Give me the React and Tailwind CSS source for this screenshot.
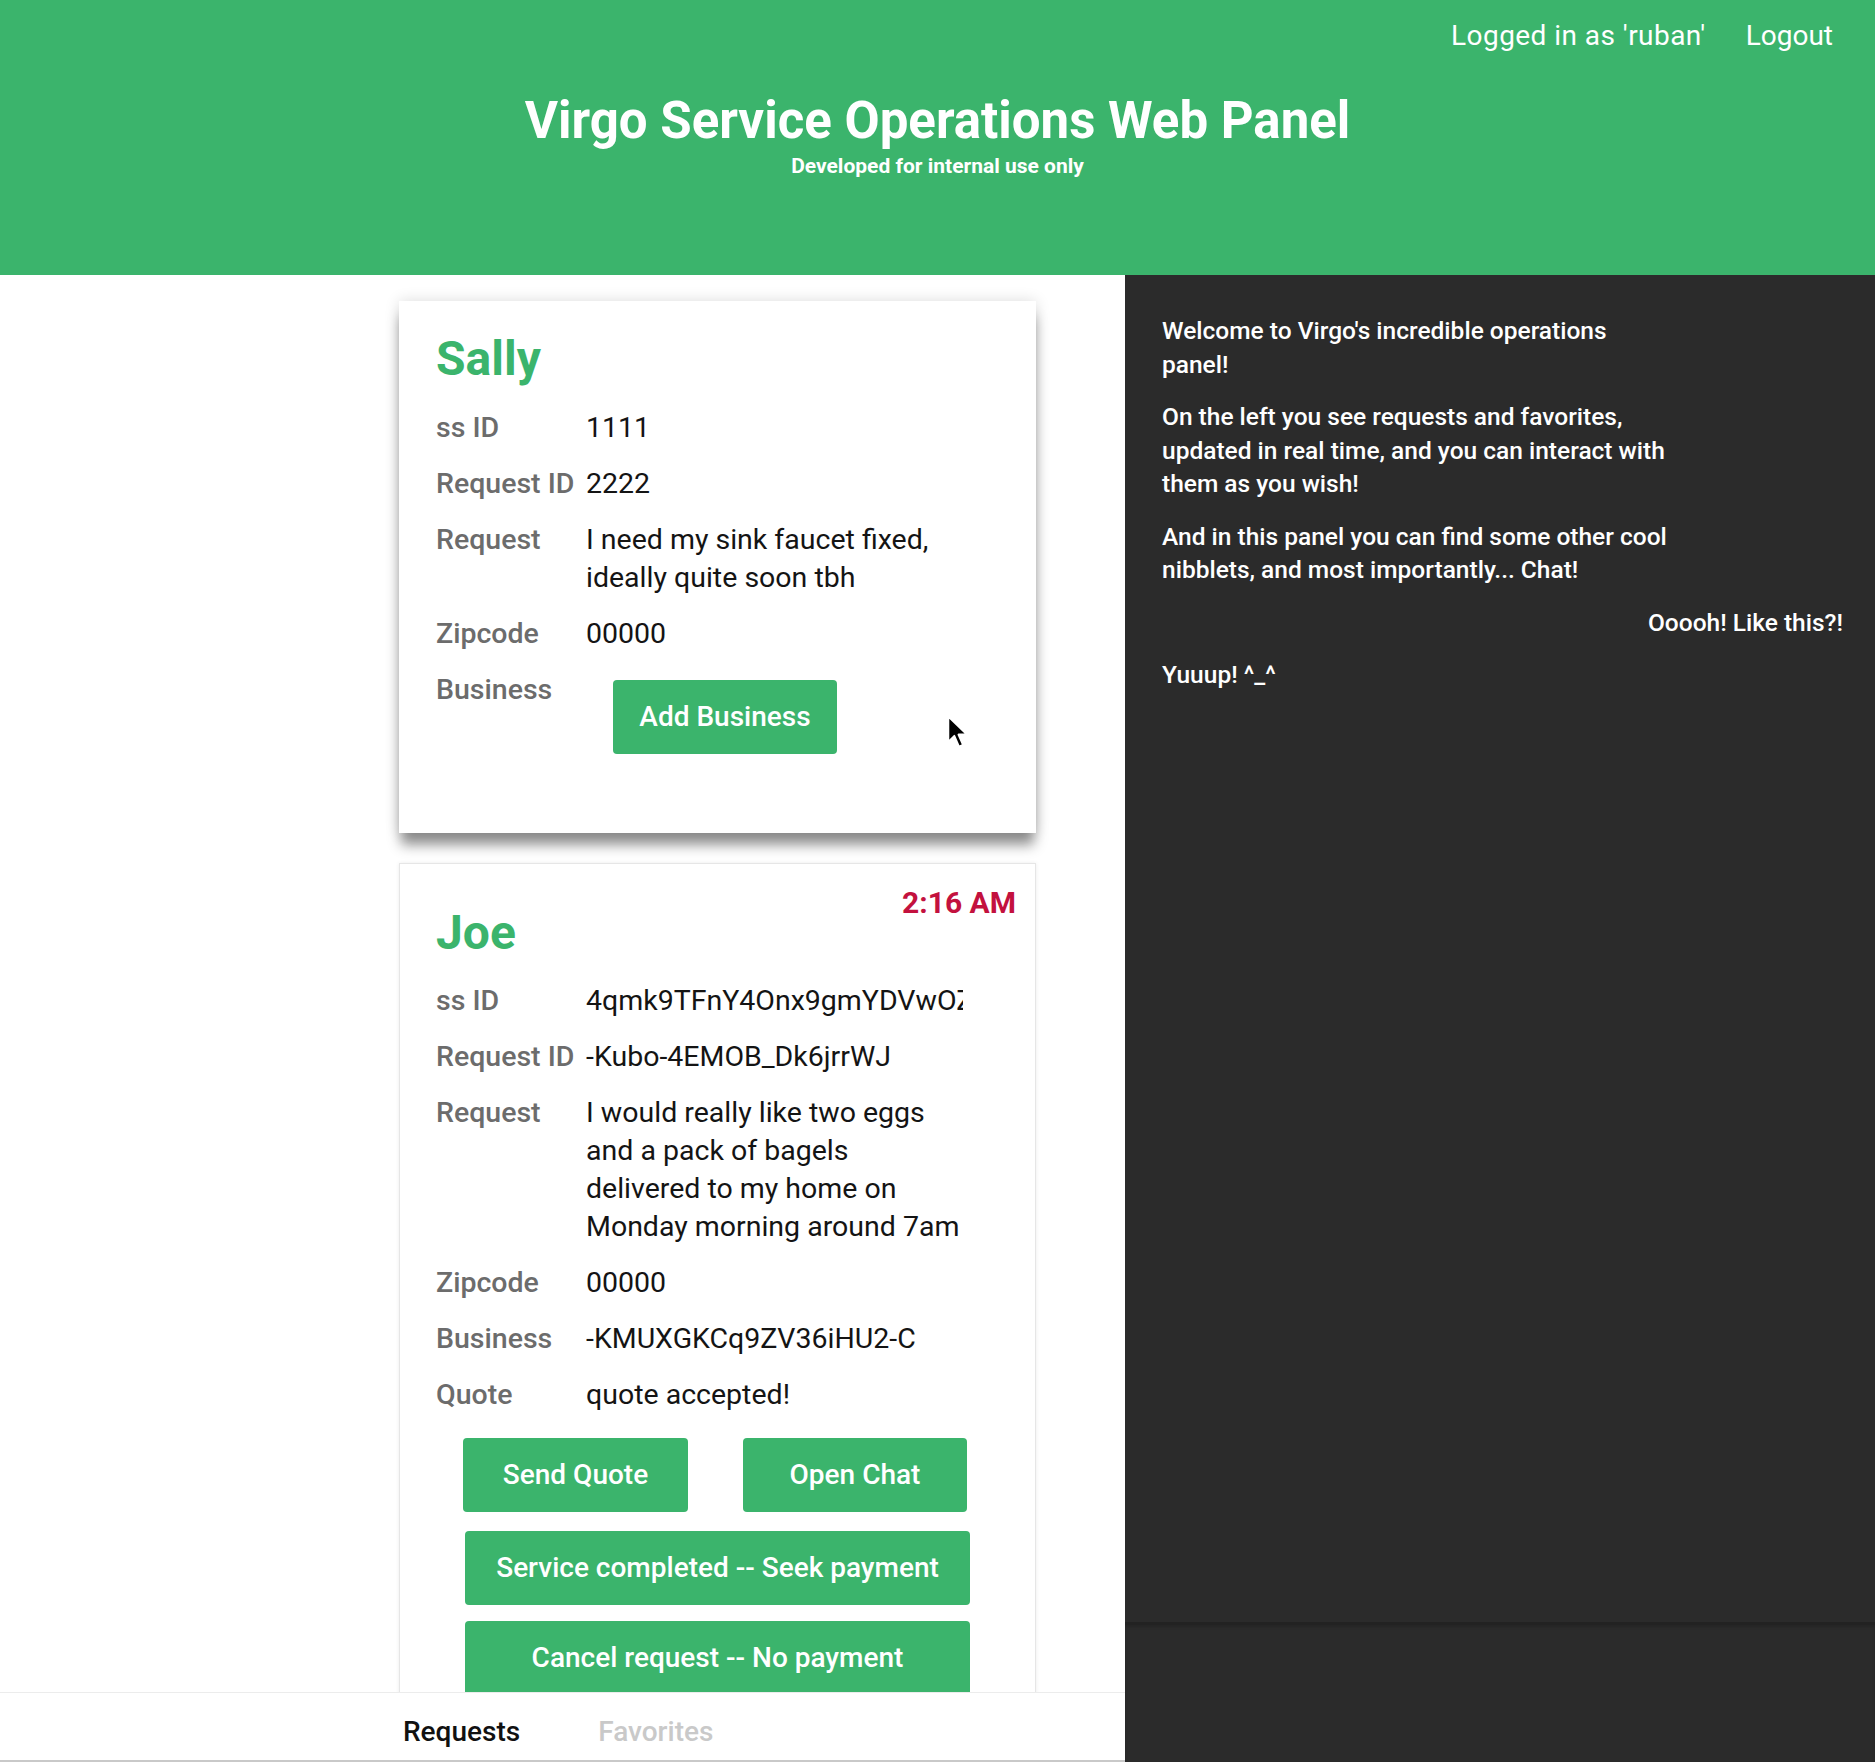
import React from "react";

const GREEN = "bg-[#3bb46c]";

function Row({ label, children, valueClass = "" }) {
  return (
    <div className="flex mt-[18px] first:mt-0">
      <div className="w-[150px] shrink-0 text-[28.5px] leading-[38px] font-medium text-[#6c6c6c]">{label}</div>
      <div className={"w-[377px] shrink-0 overflow-hidden text-[28.5px] leading-[38px] text-[#141414] " + valueClass}>{children}</div>
    </div>
  );
}

function Btn({ children, className = "" }) {
  return (
    <button className={"bg-[#3bb46c] text-white text-[28px] font-medium rounded-[4px] h-[74px] flex items-center justify-center " + className}>
      {children}
    </button>
  );
}

export default function App() {
  return (
    <div className="relative w-full h-[1762px] flex flex-col overflow-hidden" style={{ fontFamily: "Roboto, 'Noto Sans', sans-serif" }}>
      {/* Header */}
      <header className={GREEN + " h-[275px] shrink-0 flex flex-col text-white"}>
        <nav className="flex justify-end items-center gap-[40px] pt-[19px] pr-[42px] text-[28px] leading-[34px]">
          <span className="tracking-[0.45px]">Logged in as 'ruban'</span>
          <span>Logout</span>
        </nav>
        <h1 className="mt-[37px] text-center text-[51px] leading-[62px] font-bold">Virgo Service Operations Web Panel</h1>
        <p className="mt-[2px] text-center text-[21px] leading-[25px] font-bold">Developed for internal use only</p>
      </header>

      {/* Body */}
      <div className="flex flex-1 min-h-0">
        {/* Left column */}
        <div className="w-[1125px] shrink-0 bg-white flex flex-col">
          <div className="flex-1 min-h-0 overflow-hidden pl-[399px] pt-[26px]">
            {/* Card 1 */}
            <div className="w-[637px] bg-white pt-[29px] px-[37px] pb-[79px] shadow-[0_14px_12px_-2px_rgba(0,0,0,0.42),0_0_14px_rgba(0,0,0,0.14)]">
              <h2 className="text-[48px] leading-[58px] font-bold text-[#3bb46c] mb-[21px]">Sally</h2>
              <Row label="ss ID">1111</Row>
              <Row label="Request ID">2222</Row>
              <Row label="Request">I need my sink faucet fixed, ideally quite soon tbh</Row>
              <Row label="Zipcode">00000</Row>
              <Row label="Business">
                <Btn className="mt-[9px] ml-[27px] w-[224px]">Add Business</Btn>
              </Row>
            </div>

            {/* Card 2 */}
            <div className="relative w-[637px] mt-[30px] bg-white border border-[#e6e6e6] pt-[40px] px-[36px] pb-[40px] shadow-[0_0_4px_rgba(0,0,0,0.08)]">
              <div className="absolute top-[21px] right-[19px] text-[30px] leading-[36px] font-bold text-[#c3113e]">2:16 AM</div>
              <h2 className="text-[48px] leading-[58px] font-bold text-[#3bb46c] mb-[20px]">Joe</h2>
              <Row label="ss ID">4qmk9TFnY4Onx9gmYDVwOZ</Row>
              <Row label="Request ID">-Kubo-4EMOB_Dk6jrrWJ</Row>
              <Row label="Request">I would really like two eggs and a pack of bagels delivered to my home on Monday morning around 7am</Row>
              <Row label="Zipcode">00000</Row>
              <Row label="Business">-KMUXGKCq9ZV36iHU2-C</Row>
              <Row label="Quote">quote accepted!</Row>
              <div className="mt-[24px] flex pl-[27px] gap-[55px]">
                <Btn className="w-[225px]">Send Quote</Btn>
                <Btn className="w-[224px]">Open Chat</Btn>
              </div>
              <div className="mt-[19px] flex justify-center">
                <Btn className="w-[505px]">Service completed -- Seek payment</Btn>
              </div>
              <div className="mt-[16px] flex justify-center">
                <Btn className="w-[505px]">Cancel request -- No payment</Btn>
              </div>
            </div>
          </div>

          {/* Tab bar */}
          <div className="h-[70px] shrink-0 bg-white border-t border-[#ececec] border-b-2 border-b-[#c9c9c9] flex items-start pt-[22px] pl-[403px] gap-[78px] text-[28px] leading-[34px] font-medium">
            <span className="text-[#111]">Requests</span>
            <span className="text-[#c9c9c9]">Favorites</span>
          </div>
        </div>

        {/* Right column */}
        <div className="flex-1 bg-[#2b2b2b] flex flex-col">
          <div className="flex-1 min-h-0 pt-[39px] pl-[37px] pr-[32px] text-white text-[24.5px] leading-[33.5px] font-medium">
            <p className="max-w-[509px] mb-[19px]">Welcome to Virgo's incredible operations panel!</p>
            <p className="max-w-[509px] mb-[19px]">On the left you see requests and favorites, updated in real time, and you can interact with them as you wish!</p>
            <p className="max-w-[509px] mb-[19px]">And in this panel you can find some other cool nibblets, and most importantly... Chat!</p>
            <p className="text-right mb-[19px]">Ooooh! Like this?!</p>
            <p className="max-w-[509px]">Yuuup! ^_^</p>
          </div>
          <div className="h-[140px] shrink-0 border-t-[3px] border-[#222222] shadow-[inset_0_2px_3px_rgba(0,0,0,0.15)]"></div>
        </div>
      </div>

      {/* Mouse cursor */}
      <svg className="absolute left-[947px] top-[715px]" width="24" height="35" viewBox="0 0 18 26">
        <path d="M1 1 L1 20 L5.5 15.5 L9 23.5 L12 22.2 L8.6 14.5 L15 14.5 Z" fill="#000" stroke="#fff" strokeWidth="1.4" strokeLinejoin="round" />
      </svg>
    </div>
  );
}
